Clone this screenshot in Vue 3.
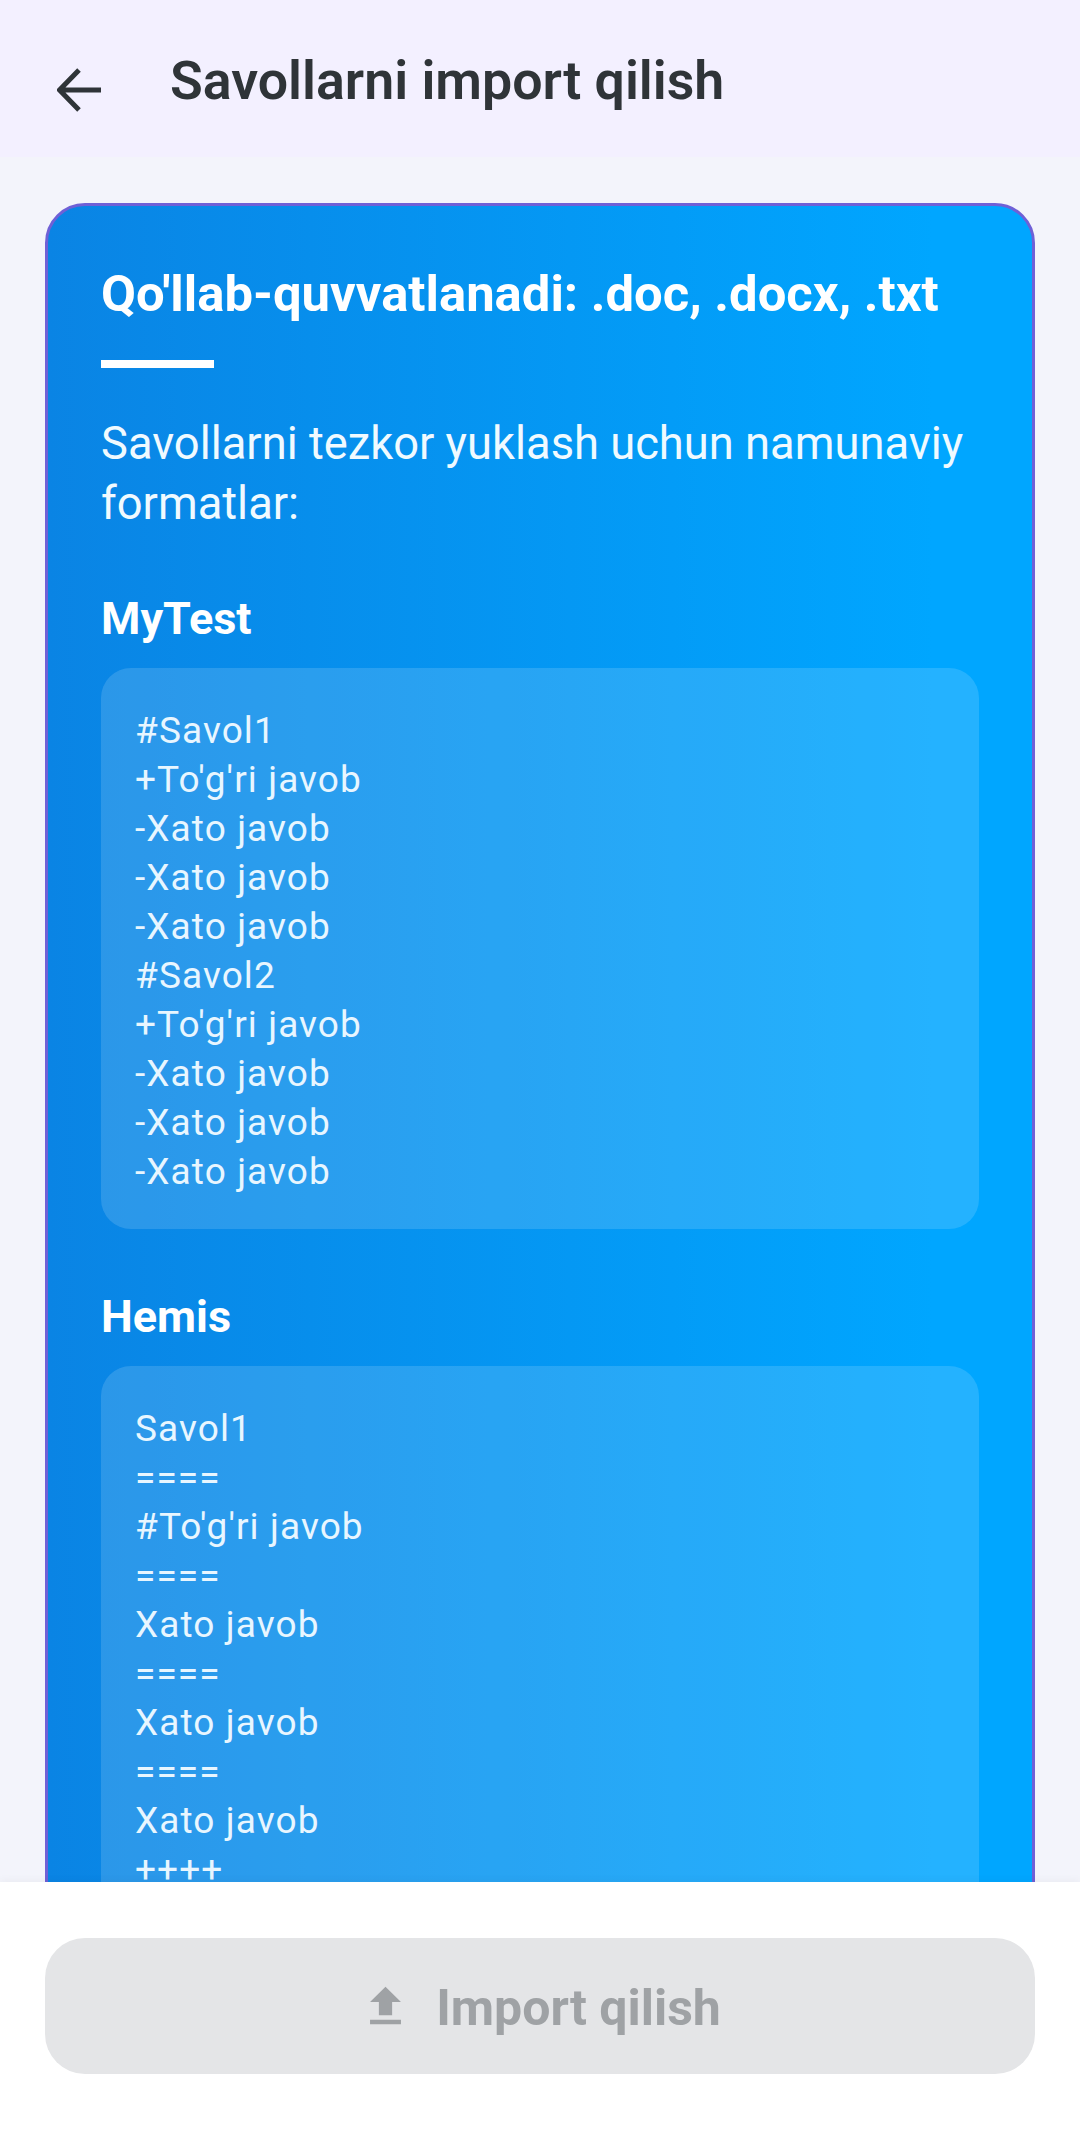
<script setup>
const formatlar = [
  {
    nom: 'MyTest',
    qatorlar: [
      '#Savol1', "+To'g'ri javob", '-Xato javob', '-Xato javob', '-Xato javob',
      '#Savol2', "+To'g'ri javob", '-Xato javob', '-Xato javob', '-Xato javob',
    ],
  },
  {
    nom: 'Hemis',
    qatorlar: [
      'Savol1', '====', "#To'g'ri javob", '====', 'Xato javob', '====',
      'Xato javob', '====', 'Xato javob', '++++',
    ],
  },
]
</script>

<template>
  <div class="ekran">
    <header class="sarlavha">
      <svg class="orqaga" width="46" height="46" viewBox="0 0 46 46">
        <path d="M44 23H3M22 3 2.500 23 22 43" fill="none" stroke="#2f3438" stroke-width="5" />
      </svg>
      <h1>Savollarni import qilish</h1>
    </header>

    <main class="kontent">
      <section class="karta">
        <h2>Qo'llab-quvvatlanadi: .doc, .docx, .txt</h2>
        <div class="chiziq"></div>
        <p class="izoh">Savollarni tezkor yuklash uchun namunaviy formatlar:</p>

        <div v-for="f in formatlar" :key="f.nom" class="format">
          <h3>{{ f.nom }}</h3>
          <div class="namuna">
            <div v-for="(q, i) in f.qatorlar" :key="i">{{ q }}</div>
          </div>
        </div>
      </section>
    </main>

    <footer class="pastki">
      <button class="import" disabled>
        <svg width="53" height="53" viewBox="0 0 24 24">
          <path d="M9 16h6v-6h4l-7-7-7 7h4zm-4 2h14v2H5z" fill="#9fa2a5" />
        </svg>
        <span>Import qilish</span>
      </button>
    </footer>
  </div>
</template>

<style>
html, body {
  margin: 0;
  background: #f3f4fb;
}
</style>

<style scoped>
.ekran {
  height: 2130px;
  display: flex;
  flex-direction: column;
  overflow: hidden;
  font-family: Roboto, "Liberation Sans", sans-serif;
  background: #f3f4fb;
}

.sarlavha {
  height: 157px;
  flex: none;
  box-sizing: border-box;
  display: flex;
  align-items: flex-start;
  padding: 67px 0 0 57px;
  background: #f3f0ff;
}
.orqaga {
  flex: none;
}
h1 {
  margin: -19px 0 0 67px;
  font-size: 53.700px;
  line-height: 66px;
  font-weight: 600;
  color: #2f3438;
}

.kontent {
  flex: 1;
  min-height: 0;
  overflow: hidden;
  padding: 46px 45px 0;
}

.karta {
  box-sizing: border-box;
  border: 3px solid #6f60d6;
  border-radius: 40px;
  padding: 58px 53px;
  background: linear-gradient(90deg, #0a84e4, #00a6ff 90%);
  color: #fff;
}
h2 {
  margin: 0;
  font-size: 50.800px;
  line-height: 60px;
  font-weight: 700;
}
.chiziq {
  width: 113px;
  height: 8px;
  margin-top: 36px;
  background: #fff;
}
.izoh {
  margin: 46px 0 0;
  font-size: 45.300px;
  line-height: 60px;
  color: #f0faff;
}

.format {
  margin-top: 60px;
}
.format + .format {
  margin-top: 63px;
}
h3 {
  margin: 0 0 24px;
  font-size: 45px;
  line-height: 50px;
  font-weight: 700;
}
.namuna {
  padding: 38px 34px 33px;
  border-radius: 30px;
  background: rgba(255, 255, 255, 0.14);
  font-size: 37px;
  line-height: 49px;
  letter-spacing: 1.100px;
  color: #e8f6ff;
}

.pastki {
  flex: none;
  height: 248px;
  box-sizing: border-box;
  padding: 56px 45px 0;
  background: #fff;
  position: relative;
  box-shadow: 0 -2px 8px rgba(0, 0, 0, 0.04);
}
.import {
  width: 100%;
  height: 136px;
  border: none;
  border-radius: 40px;
  background: #e4e5e7;
  display: flex;
  align-items: center;
  justify-content: center;
  gap: 24px;
  font-family: inherit;
  font-size: 50px;
  font-weight: 700;
  color: #9fa2a5;
}
.import span {
  margin-top: 3px;
}
</style>
